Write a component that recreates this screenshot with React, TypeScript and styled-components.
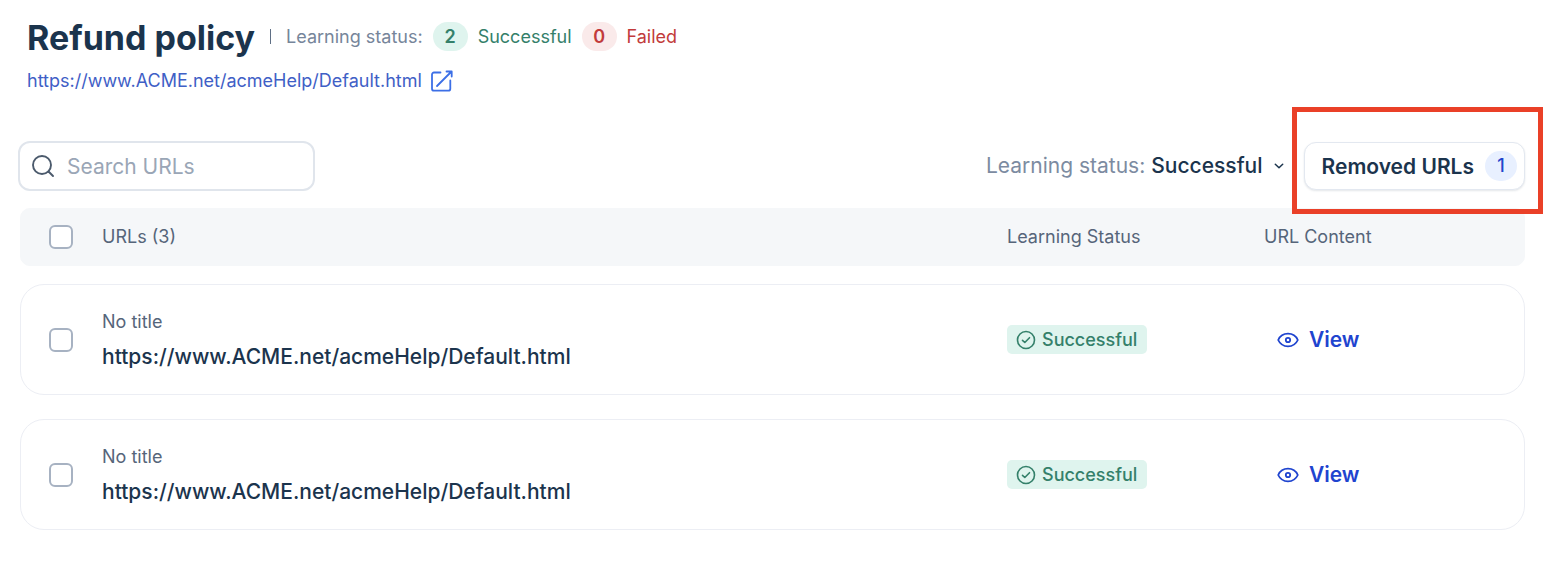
import React from 'react';
import styled, { createGlobalStyle } from 'styled-components';

const GlobalStyle = createGlobalStyle`
  * { box-sizing: border-box; }
  body {
    margin: 0;
    background: #fff;
    color: #1b344d;
    font-family: Inter, "Liberation Sans", sans-serif;
  }
  button, input, select { font: inherit; color: inherit; }
`;

const Page = styled.main`
  padding: 16px 43px 42px 20px;
`;

const Header = styled.header`
  padding-left: 7px;
`;

const TitleRow = styled.div`
  display: flex;
  align-items: center;
  height: 40px;
  font-size: 18px;
  color: #76859a;
`;

const Title = styled.h1`
  margin: 4px 0 0;
  font-size: 34px;
  line-height: 44px;
  font-weight: 700;
  color: #1b344d;
`;

const Divider = styled.span`
  width: 1px;
  height: 15px;
  margin: 0 15px;
  background: #5f6f85;
`;

const tones = {
  success: { text: '#34806a', fill: '#dff4ee' },
  danger: { text: '#c23b3b', fill: '#faeaea' },
};
type Tone = keyof typeof tones;

const Summary = styled.span<{ $tone: Tone }>`
  display: flex;
  align-items: center;
  gap: 10px;
  margin-left: 10px;
  color: ${(p) => tones[p.$tone].text};
`;

const Count = styled.strong<{ $tone: Tone }>`
  width: 35px;
  line-height: 29px;
  border-radius: 15px;
  text-align: center;
  font-weight: 600;
  background: ${(p) => tones[p.$tone].fill};
`;

const SourceLink = styled.a`
  display: inline-flex;
  align-items: center;
  gap: 8px;
  margin-top: 12px;
  font-size: 18px;
  line-height: 26px;
  color: #3f60c6;
  text-decoration: none;
`;

const Toolbar = styled.div`
  display: flex;
  align-items: center;
  margin: 47px 0 17px -2px;
`;

const SearchBox = styled.label`
  display: flex;
  align-items: center;
  gap: 12px;
  width: 297px;
  height: 50px;
  padding: 0 11px;
  border: 2px solid #e0e5ec;
  border-radius: 12px;
  color: #4b5a6c;
`;

const SearchInput = styled.input`
  flex: 1;
  min-width: 0;
  padding: 0;
  border: 0;
  outline: 0;
  background: none;
  font-size: 21px;
  &::placeholder { color: #9aa6b6; opacity: 1; }
`;

const Filter = styled.label`
  display: flex;
  align-items: center;
  gap: 6px;
  margin-left: auto;
  font-size: 21px;
  line-height: 28px;
  color: #7c8ba1;
`;

const SelectWrap = styled.span`
  display: grid;
  align-items: center;
  svg { grid-area: 1 / 1; justify-self: end; pointer-events: none; }
`;

const Select = styled.select`
  grid-area: 1 / 1;
  appearance: none;
  field-sizing: content;
  height: 28px;
  padding: 0 21px 0 0;
  border: 0;
  background: none;
  line-height: 28px;
  font-weight: 500;
  color: #1b344d;
`;

const Highlighted = styled.div`
  position: relative;
  margin-left: 20px;
  &::after {
    content: '';
    position: absolute;
    inset: -35px -18px -24px -12px;
    border: 5px solid #ea4028;
    pointer-events: none;
  }
`;

const RemovedButton = styled.button`
  display: flex;
  align-items: center;
  gap: 11px;
  height: 48px;
  padding: 0 7px 0 17px;
  border: 1px solid #e3e8f0;
  border-radius: 12px;
  background: #fff;
  box-shadow: 0 1px 2px rgba(27, 52, 77, 0.12);
  font-size: 21px;
  font-weight: 600;
`;

const RemovedCount = styled.span`
  width: 32px;
  line-height: 30px;
  border-radius: 15px;
  background: #e8f0ff;
  color: #2245cc;
  font-size: 18px;
  font-weight: 500;
`;

const Table = styled.table`
  display: block;
`;

const HeadGroup = styled.thead`
  display: block;
`;

const BodyGroup = styled.tbody`
  display: grid;
  gap: 24px;
  margin-top: 18px;
`;

const Row = styled.tr<{ $head?: boolean }>`
  display: grid;
  grid-template-columns: 53px minmax(0, 1fr) 257px 232px;
  align-items: center;
  height: ${(p) => (p.$head ? 58 : 111)}px;
  padding: 0 28px;
  border: 1px solid ${(p) => (p.$head ? '#f5f7f9' : '#eceef4')};
  border-radius: ${(p) => (p.$head ? 10 : 24)}px;
  background: ${(p) => (p.$head ? '#f5f7f9' : '#fff')};
`;

const HeadCell = styled.th`
  padding: 0;
  text-align: left;
  font-size: 18px;
  line-height: 24px;
  font-weight: 400;
  color: #56657a;
`;

const Cell = styled.td`
  padding: 0;
`;

const Checkbox = styled.input`
  appearance: none;
  display: block;
  width: 24px;
  height: 24px;
  margin: 0;
  border: 2px solid #a7b2c2;
  border-radius: 6px;
  background: #fff;
  &:checked { background: #2245cc; }
`;

const PageTitle = styled.div`
  font-size: 18px;
  line-height: 24px;
  color: #56657a;
`;

const PageUrl = styled.div`
  margin-top: 10px;
  font-size: 21px;
  line-height: 26px;
  font-weight: 500;
`;

const Badge = styled.span`
  display: inline-flex;
  align-items: center;
  gap: 6px;
  height: 29px;
  padding: 0 10px 0 9px;
  border-radius: 5px;
  background: #dff4ee;
  color: #34806a;
  font-size: 18px;
  font-weight: 500;
  vertical-align: middle;
`;

const ViewButton = styled.button`
  display: flex;
  align-items: center;
  gap: 10px;
  padding: 0 13px;
  border: 0;
  background: none;
  color: #1f44cf;
  font-size: 21px;
  line-height: 28px;
  font-weight: 600;
`;

const ExternalIcon = () => (
  <svg width="24" height="24" viewBox="0 0 24 24" fill="none" stroke="#3c6fe6" strokeWidth="1.8" strokeLinecap="round" strokeLinejoin="round" aria-hidden="true">
    <path d="M10.500 3.500H4a2 2 0 0 0-2 2v14.200a2 2 0 0 0 2 2h14.300a2 2 0 0 0 2-2V11.500M7 17 21.500 2.500M16.500 2.500h5.200v5" />
  </svg>
);

const SearchIcon = () => (
  <svg width="24" height="24" viewBox="0 0 24 24" fill="none" stroke="currentColor" strokeWidth="1.9" strokeLinecap="round" aria-hidden="true">
    <circle cx="11" cy="11" r="9" />
    <path d="m17.500 17.500 4.500 4.500" />
  </svg>
);

const ChevronIcon = () => (
  <svg width="10" height="8" viewBox="0 0 10 8" fill="none" stroke="#1b344d" strokeWidth="1.5" strokeLinecap="round" strokeLinejoin="round" aria-hidden="true">
    <path d="m1.300 2.200 3.700 3.600 3.700-3.600" />
  </svg>
);

const CheckIcon = () => (
  <svg width="20" height="20" viewBox="0 0 20 20" fill="none" stroke="currentColor" strokeWidth="1.6" strokeLinecap="round" strokeLinejoin="round" aria-hidden="true">
    <circle cx="10" cy="10" r="8.500" />
    <path d="m6.500 10.300 2.300 2.200 4.700-4.800" />
  </svg>
);

const EyeIcon = () => (
  <svg width="22" height="20" viewBox="0 0 22 20" fill="none" stroke="currentColor" strokeWidth="1.8" strokeLinejoin="round" aria-hidden="true">
    <path d="M1.200 10C3 6 6.800 3.700 11 3.700S19 6 20.800 10C19 14 15.200 16.300 11 16.300S3 14 1.200 10Z" />
    <circle cx="11" cy="10" r="2.200" />
  </svg>
);

const sourceUrl = 'https://www.ACME.net/acmeHelp/Default.html';
const pages = [
  { id: 1, title: 'No title', url: sourceUrl, status: 'Successful' },
  { id: 2, title: 'No title', url: sourceUrl, status: 'Successful' },
];

export default function App() {
  return (
    <>
      <GlobalStyle />
      <Page>
        <Header>
          <TitleRow>
            <Title>Refund policy</Title>
            <Divider />
            <span>Learning status:</span>
            <Summary $tone="success"><Count $tone="success">2</Count>Successful</Summary>
            <Summary $tone="danger"><Count $tone="danger">0</Count>Failed</Summary>
          </TitleRow>
          <SourceLink href="#source">{sourceUrl}<ExternalIcon /></SourceLink>
        </Header>
        <Toolbar>
          <SearchBox>
            <SearchIcon />
            <SearchInput type="search" placeholder="Search URLs" aria-label="Search URLs" />
          </SearchBox>
          <Filter>
            Learning status:
            <SelectWrap>
              <Select defaultValue="Successful">
                <option>Successful</option>
                <option>Failed</option>
              </Select>
              <ChevronIcon />
            </SelectWrap>
          </Filter>
          <Highlighted>
            <RemovedButton type="button">Removed URLs<RemovedCount>1</RemovedCount></RemovedButton>
          </Highlighted>
        </Toolbar>
        <Table>
          <HeadGroup>
            <Row $head>
              <HeadCell><Checkbox type="checkbox" aria-label="Select all URLs" /></HeadCell>
              <HeadCell>URLs (3)</HeadCell>
              <HeadCell>Learning Status</HeadCell>
              <HeadCell>URL Content</HeadCell>
            </Row>
          </HeadGroup>
          <BodyGroup>
            {pages.map((page) => (
              <Row key={page.id}>
                <Cell><Checkbox type="checkbox" aria-label={`Select ${page.url}`} /></Cell>
                <Cell>
                  <PageTitle>{page.title}</PageTitle>
                  <PageUrl>{page.url}</PageUrl>
                </Cell>
                <Cell><Badge><CheckIcon />{page.status}</Badge></Cell>
                <Cell><ViewButton type="button"><EyeIcon />View</ViewButton></Cell>
              </Row>
            ))}
          </BodyGroup>
        </Table>
      </Page>
    </>
  );
}
